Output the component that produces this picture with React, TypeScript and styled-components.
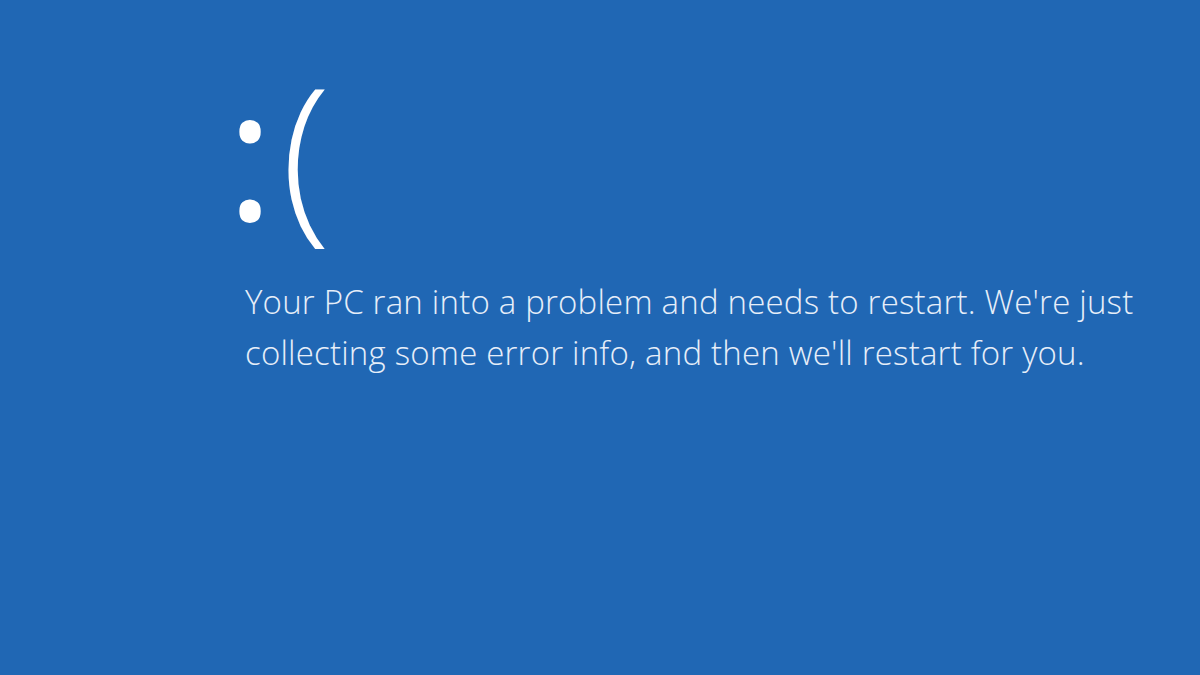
import React from "react";
import styled, { createGlobalStyle } from "styled-components";

const Global = createGlobalStyle`
  html, body { margin: 0; padding: 0; background: #2067b4; }
  #root { width: 1200px; height: 675px; }
`;

const Screen = styled.main`
  width: 1200px;
  height: 675px;
  box-sizing: border-box;
  background: #2067b4;
  padding: 58px 0 0 226px;
  display: flex;
  flex-direction: column;
  color: #e6eef9;
  font-family: "Open Sans", "Noto Sans", sans-serif;
  overflow: hidden;
`;

const Face = styled.div`
  display: flex;
  align-items: baseline;
  font-size: 183px;
  line-height: 1;
  height: 200px;
  color: #ffffff;
`;

const Eyes = styled.span`
  font-weight: 400;
`;

const Mouth = styled.span`
  font-weight: 300;
  margin-left: 7px;
`;

const Message = styled.p`
  margin: 18px 0 0 19px;
  font-size: 33px;
  font-weight: 300;
  letter-spacing: 0.2px;
  line-height: 51px;
  max-width: 920px;
`;

export default function App() {
  return (
    <>
      <Global />
      <Screen>
        <Face>
          <Eyes>:</Eyes>
          <Mouth>(</Mouth>
        </Face>
        <Message>
          Your PC ran into a problem and needs to restart. We're just
          <br />
          collecting some error info, and then we'll restart for you.
        </Message>
      </Screen>
    </>
  );
}
